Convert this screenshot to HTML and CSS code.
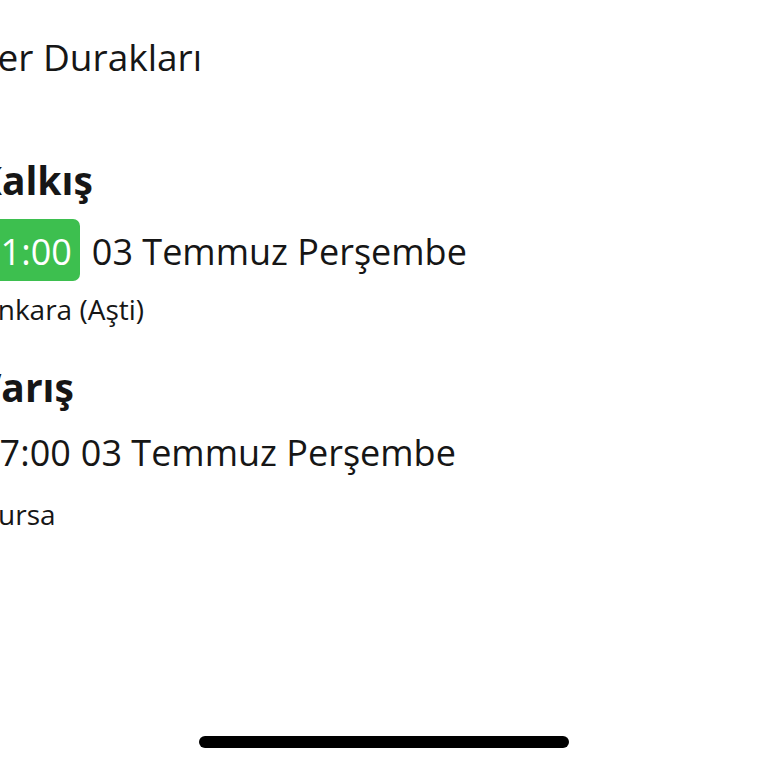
FILE: index.html
```
<!DOCTYPE html>
<html lang="tr">
<head>
<meta charset="utf-8">
<title>Sefer Durakları</title>
<link rel="stylesheet" href="styles.css">
</head>
<body>
<div class="screen">
  <h1 class="title">Sefer Durakları</h1>
  <section class="stops">
    <div class="stop">
      <h2 class="stop-label">Kalkış</h2>
      <div class="stop-time stop-time-active"><span class="time time-active">11:00</span><span class="date">03 Temmuz Perşembe</span></div>
      <div class="stop-city">Ankara (Aşti)</div>
    </div>
    <div class="stop stop-arrival">
      <h2 class="stop-label">Varış</h2>
      <div class="stop-time"><span class="time">17:00</span><span class="date">03 Temmuz Perşembe</span></div>
      <div class="stop-city">Bursa</div>
    </div>
  </section>
  <div class="home-indicator"></div>
</div>
</body>
</html>
```
FILE: styles.css
```
html, body {
  margin: 0;
  padding: 0;
  background: #ffffff;
}

.screen {
  position: relative;
  width: 768px;
  height: 768px;
  overflow: hidden;
  background: #ffffff;
  font-family: "Open Sans", "Noto Sans", sans-serif;
  color: #161616;
}

.title {
  margin: 35px 0 0 -56px;
  font-size: 37px;
  line-height: 44px;
  font-weight: 400;
  white-space: nowrap;
}

.stops {
  margin-left: -21px;
  margin-top: 79px;
}

.stop-label {
  margin: 0 0 0 -3px;
  font-size: 39px;
  line-height: 44px;
  font-weight: 700;
}

.stop-time {
  display: flex;
  align-items: flex-start;
  column-gap: 10px;
  box-sizing: border-box;
  height: 62px;
  margin-top: 17px;
  padding-top: 2px;
  font-size: 36px;
  line-height: 62px;
  white-space: nowrap;
}

.stop-time-active {
  column-gap: 12px;
}

.time-active {
  box-sizing: border-box;
  height: 62px;
  margin: -2px 0 0 -7px;
  padding: 2px 8px 0 8px;
  background: #3dbf4f;
  color: #ffffff;
  border-radius: 7px;
}

.stop-city {
  margin-top: 10px;
  padding-left: 1px;
  font-size: 28px;
  line-height: 36px;
}

.stop-arrival {
  margin-top: 38px;
}

.stop-arrival .stop-time {
  margin-top: 11px;
}

.stop-arrival .stop-city {
  margin-top: 14px;
}

.home-indicator {
  position: absolute;
  left: 199px;
  top: 736px;
  width: 370px;
  height: 12px;
  border-radius: 6px;
  background: #000000;
}
```
